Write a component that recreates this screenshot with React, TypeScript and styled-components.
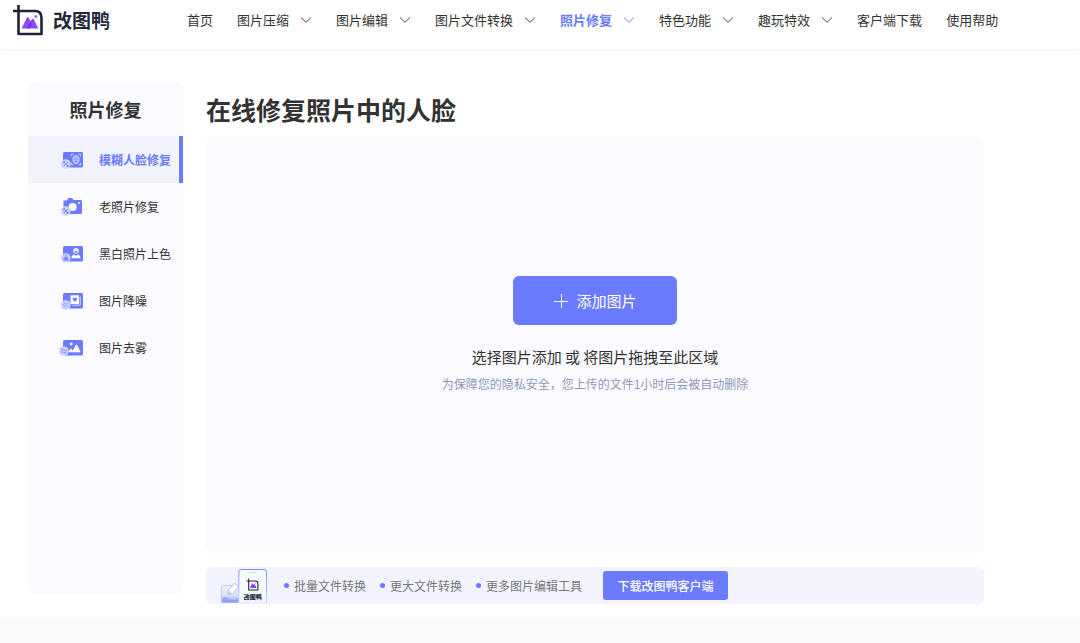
import React from 'react';
import styled, { createGlobalStyle } from 'styled-components';

const accent = '#6b7bff';
const accentSoft = '#cdd3fd';

const GlobalStyle = createGlobalStyle`
  *, *::before, *::after { box-sizing: border-box; }
  body {
    margin: 0;
    background: #fff;
    color: #333;
    font-family: "Noto Sans CJK SC", sans-serif;
    font-size: 12px;
    line-height: 20px;
  }
  h1, h2, p, ul { margin: 0; padding: 0; }
  ul { list-style: none; }
  a { color: inherit; text-decoration: none; }
  button { font-family: inherit; border: 0; cursor: pointer; }
`;

const Page = styled.div`
  display: flex;
  flex-direction: column;
  min-height: 100vh;
`;

const Header = styled.header`
  display: flex;
  align-items: center;
  padding: 0 13px 9px;
  box-shadow: 0 1px 6px rgba(0, 0, 0, 0.07);
`;

const Brand = styled.a`
  display: flex;
  align-items: center;
  gap: 9px;
  width: 174px;
  height: 40px;
  flex: none;
  color: #23283a;
  font-size: 19px;
  font-weight: 700;
`;

const NavList = styled.ul`
  display: flex;
  gap: 24px;
`;

const NavLink = styled.a<{ $active?: boolean }>`
  display: flex;
  align-items: center;
  gap: 11px;
  white-space: nowrap;
  font-size: 13px;
  color: ${p => (p.$active ? accent : '#333')};
  font-weight: ${p => (p.$active ? 700 : 400)};
`;

const Content = styled.div`
  display: flex;
  align-items: flex-start;
  gap: 23px;
  padding: 33px 96px 13px 28px;
`;

const Sidebar = styled.aside`
  flex: none;
  width: 155px;
  min-height: 512px;
  border-radius: 8px;
  background: #fafaff;
`;

const SideTitle = styled.h2`
  font-size: 18px;
  line-height: 54px;
  text-align: center;
`;

const SideLink = styled.a<{ $active?: boolean }>`
  display: flex;
  align-items: center;
  gap: 16px;
  height: 47px;
  padding-left: 31px;
  white-space: nowrap;
  border-right: 4px solid ${p => (p.$active ? accent : 'transparent')};
  background: ${p => (p.$active ? '#f2f2fb' : 'transparent')};
  color: ${p => (p.$active ? accent : '#333')};
  font-weight: ${p => (p.$active ? 700 : 400)};
  svg { flex: none; }
`;

const Main = styled.main`
  flex: 1;
  min-width: 0;
`;

const Title = styled.h1`
  font-size: 25px;
  line-height: 54px;
`;

const DropZone = styled.section`
  display: flex;
  flex-direction: column;
  align-items: center;
  min-height: 417px;
  padding: 140px 16px 16px;
  border-radius: 8px;
  background: #fafaff;
`;

const AddButton = styled.button`
  display: flex;
  align-items: center;
  justify-content: center;
  gap: 7px;
  width: 164px;
  height: 49px;
  padding: 0;
  border-radius: 6px;
  background: ${accent};
  color: #fff;
  font-size: 15px;
`;

const DropText = styled.p`
  margin-top: 22px;
  font-size: 15px;
`;

const PrivacyText = styled.p`
  margin-top: 7px;
  color: #8f98b8;
`;

const ClientBar = styled.section`
  display: flex;
  align-items: center;
  height: 37px;
  margin-top: 14px;
  padding-left: 15px;
  border-radius: 6px;
  background: #f3f3fd;
`;

const FeatureList = styled.ul`
  display: flex;
  gap: 14px;
  margin: 0 21px 0 16px;
`;

const Feature = styled.li`
  display: flex;
  align-items: center;
  gap: 5px;
  white-space: nowrap;
  color: #777;
  &::before {
    content: '';
    width: 5px;
    height: 5px;
    border-radius: 50%;
    background: ${accent};
  }
`;

const DownloadButton = styled.button`
  width: 125px;
  height: 29px;
  padding: 0;
  border-radius: 3px;
  background: ${accent};
  color: #fff;
  font-size: 12px;
  font-weight: 500;
`;

const Footer = styled.footer`
  flex: 1;
  min-height: 26px;
  background: #f8f9fb;
`;

const LogoShape = () => (
  <>
    <path d="M0 6H22Q28.5 6 28.5 13V29H5.5V0" fill="none" stroke="#1f2235" strokeWidth="2.6" strokeLinejoin="round" />
    <path d="M8.6 23.5L13.5 13.2Q14.7 11 16 13.2L17.5 16L18.8 14.4Q20 13 21 14.8L25.2 23.5Z" fill="#9047fb" />
    <path d="M14 23.5L17.5 16.4L18.8 19.4L16.4 23.5Z" fill="#7430e6" />
    <circle cx="22.9" cy="11.4" r="1.5" fill="#a665ff" />
  </>
);

const Logo = () => (
  <svg width="31" height="31" viewBox="0 0 31 31" aria-hidden="true">
    <LogoShape />
  </svg>
);

const Chevron = () => (
  <svg width="12" height="8" viewBox="0 0 12 8" fill="none" stroke="currentColor" strokeWidth="0.9" aria-hidden="true">
    <path d="M1 1.5L6 6.3L11 1.5" />
  </svg>
);

const Plus = () => (
  <svg width="16" height="16" viewBox="0 0 16 16" fill="none" stroke="#fff" aria-hidden="true">
    <path d="M1 8.5H15M8.5 1V15" />
  </svg>
);

type IconKind = 'face' | 'camera' | 'person' | 'noise' | 'haze';

const Tools = () => (
  <>
    <path d="M4.7 11.9L8.9 16.1M8.9 11.9L4.7 16.1" stroke={accent} strokeWidth="0.9" fill="none" />
    <path d="M4.2 12.8L5.6 11.4M8 16.8L9.7 15.1" stroke={accent} strokeWidth="1.1" fill="none" />
  </>
);

const SideIcon = ({ kind }: { kind: IconKind }) => (
  <svg width="24" height="20" viewBox="0 0 24 20" aria-hidden="true">
    {kind === 'camera' ? (
      <>
        <path d="M4.5 3.6H8L8.9 1.6Q9.2 1 9.8 1H12.6Q13.2 1 13.5 1.6L14.4 3H21.5Q23 3 23 4.5V15.5Q23 17 21.5 17H5.5Q4.5 17 4.5 16Z" fill={accent} />
        <circle cx="13.6" cy="10" r="4" fill="#fff" />
        <circle cx="20" cy="6" r="1" fill="#fff" />
      </>
    ) : (
      <rect x="4" y="2" width="20" height="15.5" rx="1.6" fill={accent} />
    )}
    {kind === 'face' && (
      <>
        <path d="M12.5 6.2V4.2H14.5M19.5 4.2H21.5V6.2M21.5 12.8V14.8H19.5M14.5 14.8H12.5V12.8" fill="none" stroke="#dfe2ff" strokeWidth="0.9" />
        <path d="M14 7.3Q17 3.8 20 7.3V10.7Q19.6 13.4 17 13.8Q14.4 13.4 14 10.7Z" fill="#aeb7ff" stroke="#dfe2ff" strokeWidth="0.7" />
        <path d="M15.2 9.2H16.3M17.7 9.2H18.8M16 11.6H18" stroke={accent} strokeWidth="0.9" />
      </>
    )}
    {kind === 'person' && (
      <>
        <circle cx="17" cy="6.8" r="2.9" fill="#e6e8ff" />
        <path d="M12.3 14.3Q12.5 10.9 15.3 10.4L17 12L18.7 10.4Q21.3 10.9 21.6 14.3Z" fill="#fff" />
        <path d="M15.4 7H18.6Q18.2 9.2 17 9.2T15.4 7Z" fill="#8a96ff" />
      </>
    )}
    {kind === 'noise' && (
      <>
        <path d="M21.2 5.5V14.2H13.5" fill="none" stroke="#d9ddff" strokeWidth="1" />
        <rect x="11.5" y="4.3" width="8.5" height="8.6" rx="0.5" fill="#fff" />
        <path d="M15.8 10.8L13.6 8.6Q13.2 6.9 14.5 6.8Q15.4 6.8 15.8 7.5Q16.2 6.8 17.1 6.8Q18.4 6.9 18 8.6Z" fill={accent} />
      </>
    )}
    {kind === 'haze' && (
      <>
        <circle cx="12.3" cy="6" r="1.4" fill="#fff" />
        <path d="M8.8 14.3L12 10.6L13.8 12.4L16.7 7Q17.4 6 18.1 7L21.8 14.3Z" fill="#fff" />
      </>
    )}
    {kind === 'haze' ? (
      <>
        <circle cx="4.8" cy="13" r="4.8" fill={accentSoft} />
        <path d="M2 12.2Q3.4 10.6 4.8 12T7.6 11.8M2 14.6Q3.4 13 4.8 14.4T7.6 14.2" stroke={accent} strokeWidth="0.9" fill="none" />
      </>
    ) : (
      <circle cx="6.8" cy="14" r="4.8" fill={accentSoft} />
    )}
    {(kind === 'face' || kind === 'camera') && <Tools />}
    {kind === 'person' && (
      <path d="M4.4 13.2H6.1V10.8H7.6V13.2H9.4V16.8H4.4Z" fill="#8490ff" />
    )}
    {kind === 'noise' && (
      <path d="M4.5 16.2L9 11.7M4.1 13.8L6.3 11.6M7.3 16.4L9.5 14.2" stroke={accent} strokeWidth="0.8" fill="none" />
    )}
  </svg>
);

const ClientArt = () => (
  <svg width="47" height="35" viewBox="0 0 47 35" aria-hidden="true">
    <defs>
      <linearGradient id="photo" x1="0" y1="0" x2="0" y2="1">
        <stop offset="0" stopColor="#eef0ff" />
        <stop offset="0.6" stopColor="#dde1ff" />
        <stop offset="1" stopColor="#8799fb" />
      </linearGradient>
      <linearGradient id="phone" x1="0" y1="0" x2="0" y2="1">
        <stop offset="0" stopColor="#7f8efb" />
        <stop offset="1" stopColor="#d0d7fd" />
      </linearGradient>
    </defs>
    <rect x="0.5" y="17.5" width="18" height="17" rx="1" fill="url(#photo)" stroke="#b4bffc" strokeWidth="0.8" />
    <path d="M1 31Q4 27 8 30.5T18 29.5V34.5H1Z" fill="#8f9efa" opacity="0.7" />
    <path d="M6.8 26.8L7.4 22.3L13.6 15L17.6 19L11.4 26.2Z" fill="#fff" stroke="#b3b9d8" strokeWidth="0.9" />
    <path d="M6.8 26.8L7.4 22.3L11.4 26.2Z" fill="#c9cde6" />
    <path d="M17.8 35V4Q17.8 1.5 20.3 1.5H43Q45.5 1.5 45.5 4V35Z" fill="#f4faff" stroke="url(#phone)" />
    <path d="M28 4.3H35.5" stroke="#d4daf5" />
    <g transform="translate(25.5 10.5) scale(.4)">
      <LogoShape />
    </g>
    <text x="31.7" y="31" textAnchor="middle" fontSize="6" fontWeight="900" fill="#23283a">改图鸭</text>
  </svg>
);

const navItems = [
  { label: '首页' },
  { label: '图片压缩', menu: true },
  { label: '图片编辑', menu: true },
  { label: '图片文件转换', menu: true },
  { label: '照片修复', menu: true, active: true },
  { label: '特色功能', menu: true },
  { label: '趣玩特效', menu: true },
  { label: '客户端下载' },
  { label: '使用帮助' },
];

const sideItems: { label: string; icon: IconKind; active?: boolean }[] = [
  { label: '模糊人脸修复', icon: 'face', active: true },
  { label: '老照片修复', icon: 'camera' },
  { label: '黑白照片上色', icon: 'person' },
  { label: '图片降噪', icon: 'noise' },
  { label: '图片去雾', icon: 'haze' },
];

const features = ['批量文件转换', '更大文件转换', '更多图片编辑工具'];

export default function App() {
  return (
    <Page>
      <GlobalStyle />
      <Header>
        <Brand href="#"><Logo />改图鸭</Brand>
        <nav>
          <NavList>
            {navItems.map(item => (
              <li key={item.label}>
                <NavLink href="#" $active={item.active}>
                  {item.label}
                  {item.menu && <Chevron />}
                </NavLink>
              </li>
            ))}
          </NavList>
        </nav>
      </Header>
      <Content>
        <Sidebar>
          <SideTitle>照片修复</SideTitle>
          <ul>
            {sideItems.map(item => (
              <li key={item.label}>
                <SideLink href="#" $active={item.active}>
                  <SideIcon kind={item.icon} />
                  {item.label}
                </SideLink>
              </li>
            ))}
          </ul>
        </Sidebar>
        <Main>
          <Title>在线修复照片中的人脸</Title>
          <DropZone>
            <AddButton type="button"><Plus />添加图片</AddButton>
            <DropText>选择图片添加 或 将图片拖拽至此区域</DropText>
            <PrivacyText>为保障您的隐私安全，您上传的文件1小时后会被自动删除</PrivacyText>
          </DropZone>
          <ClientBar>
            <ClientArt />
            <FeatureList>
              {features.map(text => <Feature key={text}>{text}</Feature>)}
            </FeatureList>
            <DownloadButton type="button">下载改图鸭客户端</DownloadButton>
          </ClientBar>
        </Main>
      </Content>
      <Footer />
    </Page>
  );
}
